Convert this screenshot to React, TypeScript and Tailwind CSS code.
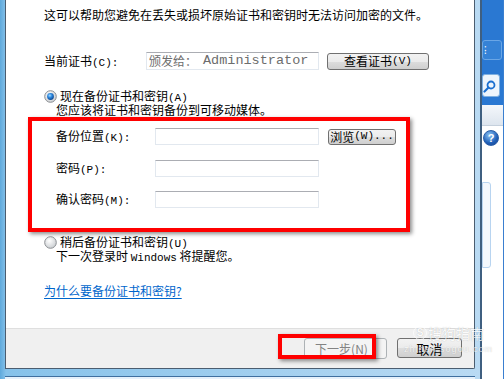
const cjk = "font-['Noto_Sans_CJK_SC','Noto_Sans',sans-serif]";

const L = ({ children }: { children: React.ReactNode }) => (
  <span className="font-['Liberation_Mono',monospace] text-[11px] leading-none">{children}</span>
);

const Radio = ({ checked }: { checked?: boolean }) => (
  <svg width="13" height="13" viewBox="0 0 13 13" className="shrink-0">
    <defs>
      <radialGradient id="rbg" cx="40%" cy="35%" r="75%">
        <stop offset="0" stopColor="#ffffff" />
        <stop offset="1" stopColor="#c4c8cc" />
      </radialGradient>
      <radialGradient id="rdot" cx="40%" cy="35%" r="70%">
        <stop offset="0" stopColor="#a6dcff" />
        <stop offset="0.45" stopColor="#2a86de" />
        <stop offset="1" stopColor="#0c3f86" />
      </radialGradient>
    </defs>
    <circle cx="6.5" cy="6.5" r="5.8" fill="url(#rbg)" stroke="#8b8e92" strokeWidth="1" />
    {checked && <circle cx="6.5" cy="6.5" r="3.4" fill="url(#rdot)" />}
  </svg>
);

const btn =
  "border border-[#707070] rounded-[3px] bg-[linear-gradient(to_bottom,#f2f2f2_0%,#ebebeb_50%,#dddddd_51%,#cfcfcf_100%)] flex items-center justify-center text-black";

const input = "bg-white border border-[#e2e8ef] border-t-[#abadb3]";

export default function App() {
  return (
    <div className={`relative flex w-[504px] h-[379px] overflow-hidden bg-white ${cjk} text-[12px]`}>
      {/* window frame + dialog */}
      <div className="w-[482px] h-full flex flex-col pl-[5px] pr-[5px] border-r-2 border-[#3f5f80] bg-[linear-gradient(to_right,#5fa9dc,#86c2ea_6px,#b9daf3)]">
        <div className="w-[470px] h-[369px] shrink-0 flex flex-col border-l border-r border-b border-[#4b5d70] rounded-br-[2px]">
          {/* body */}
          <div className="flex-1 bg-white flex flex-col">
            <div className="ml-[38px] mt-[8px] h-[14px] leading-[14px]">
              这可以帮助您避免在丢失或损坏原始证书和密钥时无法访问加密的文件。
            </div>

            <div className="ml-[38px] mt-[30px] h-[18px] flex items-center">
              <div className="w-[102px] leading-[14px]">
                当前证书<L>(C):</L>
              </div>
              <div className={`${input} w-[173px] h-[18px] flex items-center pl-[2px] text-[#6d6d6d]`}>
                <span>颁发给：</span>
                <span className="font-['Liberation_Mono',monospace] text-[13.5px] ml-[6px] leading-none">
                  Administrator
                </span>
              </div>
              <div className={`${btn} ml-[8px] w-[102px] h-[17px] leading-none`}>
                查看证书<L>(V)</L>
              </div>
            </div>

            <div className="ml-[38px] mt-[19px] h-[14px] flex items-center">
              <Radio checked />
              <span className="ml-[3px] leading-[14px]">
                现在备份证书和密钥<L>(A)</L>
              </span>
            </div>
            <div className="ml-[50px] h-[14px] leading-[14px]">您应该将证书和密钥备份到可移动媒体。</div>

            {/* highlighted form */}
            <div className="ml-[22px] w-[382px] h-[115px] border-4 border-[#ff0000] shadow-[2px_2px_4px_rgba(0,0,0,0.45)] pt-[7px] pl-[24px] flex flex-col">
              <div className="h-[17px] flex items-center">
                <div className="w-[99px] leading-[14px]">
                  备份位置<L>(K):</L>
                </div>
                <div className={`${input} w-[164px] h-[17px]`} />
                <div className={`${btn} ml-[9px] w-[68px] h-[16px] leading-none`}>
                  浏览<L>(W)...</L>
                </div>
              </div>
              <div className="mt-[15px] h-[17px] flex items-center">
                <div className="w-[99px] leading-[14px]">
                  密码<L>(P):</L>
                </div>
                <div className={`${input} w-[164px] h-[17px]`} />
              </div>
              <div className="mt-[14px] h-[17px] flex items-center">
                <div className="w-[99px] leading-[14px]">
                  确认密码<L>(M):</L>
                </div>
                <div className={`${input} w-[164px] h-[17px]`} />
              </div>
            </div>

            <div className="ml-[38px] mt-[3px] h-[14px] flex items-center">
              <Radio />
              <span className="ml-[3px] leading-[14px]">
                稍后备份证书和密钥<L>(U)</L>
              </span>
            </div>
            <div className="ml-[50px] h-[14px] leading-[14px]">
              下一次登录时 <L>Windows</L> 将提醒您。
            </div>

            <div className="ml-[38px] mt-[21px] h-[14px] leading-[14px] text-[#0066cc] underline underline-offset-2">
              为什么要备份证书和密钥?
            </div>
          </div>

          {/* footer */}
          <div className="h-[40px] shrink-0 bg-[#f0f0f0] border-t border-[#dfdfdf] flex justify-end items-start pt-[9px] pr-[12px] gap-[10px] text-[12px]">
            <div className="w-[83px] h-[21px] border border-[#adb2b5] rounded-[3px] bg-[#f4f4f4] flex items-center justify-center pr-[8px] text-[#838383] leading-none">
              下一步(N)
            </div>
            <div className={`${btn} w-[65px] h-[20px] leading-none text-[13px]`}>取消</div>
          </div>
        </div>
        <div className="h-[7px] shrink-0" />
        <div className="flex-1 border-t border-[#3f6f9f] bg-[#e6f1fb]" />
      </div>

      {/* background window at the right */}
      <div className="flex-1 h-full flex flex-col border-r border-[#3a7fd0] bg-white">
        <div className="h-[40px] bg-[#2a78d2]" />
        <div className="h-[20px] bg-[#2a78d2] flex">
          <div className="w-[20px] h-[20px] border border-[#6aa6e6] rounded-[3px] bg-[#3582d6] flex items-center pl-[1px] text-white text-[10px] leading-none">
            ⁝
          </div>
        </div>
        <div className="h-[14px] bg-[#2a78d2]" />
        <div className="h-[23px] bg-[#2a78d2] flex">
          <div className="w-[18px] h-[23px] border border-[#7fb0e0] rounded-[3px] bg-[#eef5fc] flex items-center">
            <svg width="14" height="14" viewBox="0 0 14 14">
              <circle cx="8" cy="6" r="3.5" fill="none" stroke="#1a6fd0" strokeWidth="1.8" />
              <line x1="5.5" y1="8.5" x2="1.5" y2="12.5" stroke="#1a6fd0" strokeWidth="2.2" strokeLinecap="round" />
            </svg>
          </div>
        </div>
        <div className="h-[8px] bg-[#2a78d2]" />
        <div className="h-[21px] bg-[linear-gradient(to_bottom,#f4f7fb,#dde5ee)] border-b border-[#c5d0dc]" />
        <div className="mt-[4px] ml-[1px] w-[16px] h-[16px] rounded-full border border-[#2a5ea8] bg-[radial-gradient(circle_at_40%_30%,#8cc4f4,#1f5fb8_60%,#173f86)] flex items-center justify-center text-white text-[11px] font-bold leading-none font-['Liberation_Sans',sans-serif]">
          ?
        </div>
        <div className="mt-[36px] w-[9px] h-[86px] border border-[#b8d4f0] rounded-r-[3px] bg-[#f4f8fd]" />
      </div>

      {/* annotation box around the next button */}
      <div className="absolute left-[278px] top-[334px] w-[98px] h-[25px] border-4 border-[#ff0000] shadow-[2px_2px_4px_rgba(0,0,0,0.45)]" />

      {/* watermark */}
      <div className="absolute left-[404px] top-[326px] flex flex-col items-center text-white opacity-75 [text-shadow:0_0_1px_rgba(0,0,0,0.35)]">
        <div className="flex items-center gap-[1px] text-[14px] leading-none">
          <span className="w-[14px] h-[14px] rounded-full border border-white flex items-center justify-center text-[10px] font-bold font-['Liberation_Sans',sans-serif]">
            S
          </span>
          搜狗指南
        </div>
        <div className="mt-[5px] text-[9px] leading-none tracking-[1px] font-['Liberation_Sans',sans-serif]">
          zhinan.sogou.com
        </div>
      </div>
    </div>
  );
}
